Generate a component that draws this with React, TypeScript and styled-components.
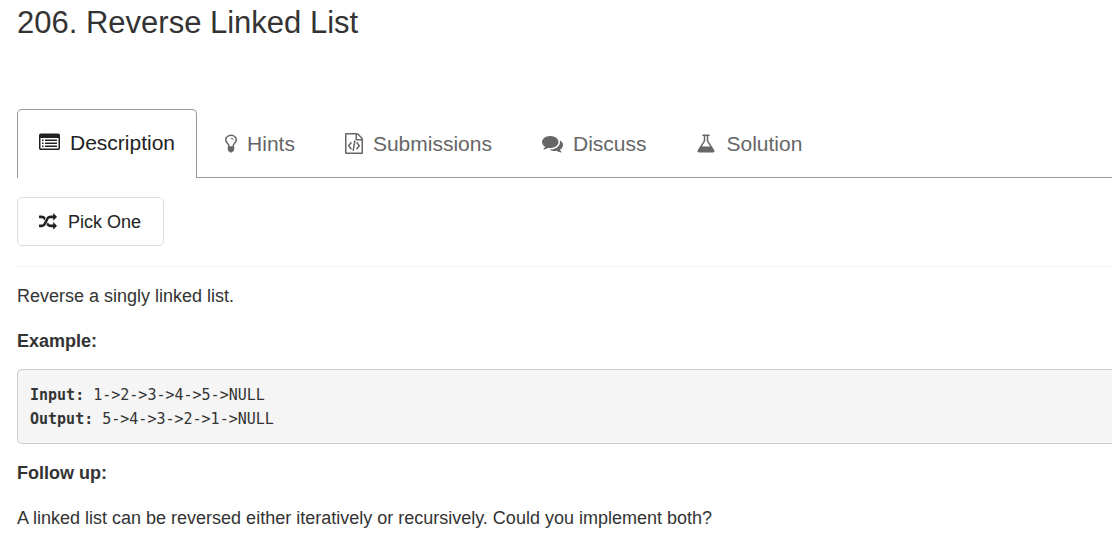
import React from "react";
import styled, { createGlobalStyle } from "styled-components";

const GlobalStyle = createGlobalStyle`
  *, *::before, *::after { box-sizing: border-box; }
  body {
    margin: 0;
    background: #fff;
    color: #333;
    font-family: "Liberation Sans", Arial, sans-serif;
    font-size: 18px;
    line-height: 26px;
  }
`;

const Page = styled.main`
  padding-left: 17px;
  overflow-x: hidden;
`;

const Title = styled.h1`
  margin: 0;
  padding: 6px 0 69px;
  font-size: 31px;
  line-height: 34px;
  font-weight: 400;
`;

const TabList = styled.ul`
  display: flex;
  gap: 6px;
  margin: 0;
  padding: 0;
  list-style: none;
  border-bottom: 1px solid #999;
`;

const TabItem = styled.li`
  display: flex;
  margin-bottom: -1px;
`;

const TabLink = styled.a<{ $active?: boolean }>`
  display: flex;
  align-items: center;
  gap: 10px;
  height: 69px;
  padding: ${(p) => (p.$active ? "0 21px 3px" : "0 21px 1px")};
  border: 1px solid transparent;
  border-radius: 5px 5px 0 0;
  border-bottom: 0;
  font-size: 21px;
  line-height: 30px;
  text-decoration: none;
  color: ${(p) => (p.$active ? "#222" : "#666")};
  border-color: ${(p) => (p.$active ? "#999" : "transparent")};
  background: ${(p) => (p.$active ? "#fff" : "transparent")};
`;

const Icon = styled.svg`
  display: block;
  flex: none;
  fill: currentColor;
`;

const PickButton = styled.button`
  display: flex;
  align-items: center;
  gap: 11px;
  height: 49px;
  margin: 19px 0 20px;
  padding: 0 22px 0 21px;
  border: 1px solid #ddd;
  border-radius: 5px;
  background: #fff;
  color: #222;
  font: inherit;
`;

const Divider = styled.hr`
  margin: 0 0 16px;
  border: 0;
  border-top: 1px dotted #e7e7e7;
`;

const Paragraph = styled.p`
  margin: 0 0 19px;
`;

const CodeBlock = styled.pre`
  margin: -4px 0 16px;
  padding: 13px 12px 12px;
  border: 1px solid #ccc;
  border-right: 0;
  border-radius: 5px 0 0 5px;
  background: #f5f5f5;
  font-family: "DejaVu Sans Mono", monospace;
  font-size: 15px;
  line-height: 24px;
`;

type Glyph = { x: number; span: number; paths: string[] };

const glyphs: Record<string, Glyph> = {
  list: {
    x: 0,
    span: 1792,
    paths: [
      "M384 1184v64q0 13-9.500 22.500t-22.500 9.500h-64q-13 0-22.500-9.500t-9.500-22.500v-64q0-13 9.500-22.500t22.500-9.500h64q13 0 22.500 9.500t9.500 22.500z",
      "M384 928v64q0 13-9.500 22.500t-22.500 9.500h-64q-13 0-22.500-9.500t-9.500-22.500v-64q0-13 9.500-22.500t22.500-9.500h64q13 0 22.500 9.500t9.500 22.500z",
      "M384 672v64q0 13-9.500 22.500t-22.500 9.500h-64q-13 0-22.500-9.500t-9.500-22.500v-64q0-13 9.500-22.500t22.500-9.500h64q13 0 22.500 9.500t9.500 22.500z",
      "M1536 1184v64q0 13-9.500 22.500t-22.500 9.500h-960q-13 0-22.500-9.500t-9.500-22.500v-64q0-13 9.500-22.500t22.500-9.500h960q13 0 22.500 9.500t9.500 22.500z",
      "M1536 928v64q0 13-9.500 22.500t-22.500 9.500h-960q-13 0-22.500-9.500t-9.500-22.500v-64q0-13 9.500-22.500t22.500-9.500h960q13 0 22.500 9.500t9.500 22.500z",
      "M1536 672v64q0 13-9.500 22.500t-22.500 9.500h-960q-13 0-22.500-9.500t-9.500-22.500v-64q0-13 9.500-22.500t22.500-9.500h960q13 0 22.500 9.500t9.500 22.500z",
      "M1664 1376v-832q0-13-9.500-22.500t-22.500-9.500h-1472q-13 0-22.500 9.500t-9.500 22.500v832q0 13 9.500 22.500t22.500 9.500h1472q13 0 22.500-9.500t9.500-22.500zm128-1088v1088q0 66-47 113t-113 47h-1472q-66 0-113-47t-47-113v-1088q0-66 47-113t113-47h1472q66 0 113 47t47 113z",
    ],
  },
  bulb: {
    x: 384,
    span: 1024,
    paths: [
      "M1120 576q0 13-9.500 22.500t-22.500 9.500-22.500-9.500-9.500-22.500q0-46-54-71t-106-25q-13 0-22.500-9.500t-9.500-22.500 9.500-22.500 22.500-9.500q50 0 99.500 16t87 54 37.500 90zm160 0q0-72-34.500-134t-90-101.500-123-62-136.500-22.500-136.500 22.500-123 62-90 101.500-34.500 134q0 101 68 180 10 11 30.500 33t30.500 33q128 153 141 298h228q13-145 141-298 10-11 30.500-33t30.500-33q68-79 68-180zm128 0q0 155-103 268-45 49-74.500 87t-59.500 95.500-34 107.500q47 28 47 82 0 37-25 64 25 27 25 64 0 52-45 81 13 23 13 47 0 46-31.500 71t-77.500 25q-20 44-60 70t-87 26-87-26-60-70q-46 0-77.500-25t-31.500-71q0-24 13-47-45-29-45-81 0-37 25-64-25-27-25-64 0-54 47-82-4-50-34-107.500t-59.500-95.500-74.500-87q-103-113-103-268 0-99 44.500-184.500t117-142 164-89 186.500-32.500 186.500 32.500 164 89 117 142 44.500 184.500z",
    ],
  },
  code: {
    x: 128,
    span: 1536,
    paths: [
      "M1596 380q28 28 48 76t20 88v1152q0 40-28 68t-68 28h-1344q-40 0-68-28t-28-68v-1600q0-40 28-68t68-28h896q40 0 88 20t76 48zm-444-244v376h376q-10-29-22-41l-313-313q-12-12-41-22zm384 1528v-1024h-416q-40 0-68-28t-28-68v-416h-768v1536h1280zm-928-896q8-11 21-12.500t24 6.500l51 38q11 8 12.500 21t-6.500 24l-182 243 182 243q8 11 6.500 24t-12.500 21l-51 38q-11 8-24 6.500t-21-12.500l-226-301q-14-19 0-38zm802 301q14 19 0 38l-226 301q-8 11-21 12.500t-24-6.500l-51-38q-11-8-12.500-21t6.500-24l182-243-182-243q-8-11-6.500-24t12.500-21l51-38q11-8 24-6.500t21 12.500zm-620 461q-13-2-20.500-13t-5.500-24l138-831q2-13 13-20.500t24-5.500l63 10q13 2 20.500 13t5.500 24l-138 831q-2 13-13 20.500t-24 5.500z",
    ],
  },
  comments: {
    x: 0,
    span: 1792,
    paths: [
      "M1408 768q0 139-94 257t-256.500 186.500-353.500 68.500q-86 0-176-16-124 88-278 128-36 9-86 16h-3q-11 0-20.500-8t-11.500-21q-1-3-1-6.500t.5-6.500 2-6l2.500-5 3.500-5.500 4-5 4.500-5 4-4.500q5-6 23-25t26-29.500 22.500-29 25-38.500 20.500-44q-124-72-195-177t-71-224q0-139 94-257t256.500-186.500 353.500-68.500 353.500 68.500 256.500 186.500 94 257zm384 256q0 120-71 224.500t-195 176.500q10 24 20.500 44t25 38.500 22.500 29 26 29.500 23 25q1 1 4 4.500t4.500 5 4 5 3.500 5.500l2.500 5 2 6 .5 6.500-1 6.500q-3 14-13 22t-22 7q-50-7-86-16-154-40-278-128-90 16-176 16-271 0-472-132 58 4 88 4 161 0 309-45t264-129q125-92 192-212t67-254q0-77-23-152 129 71 204 178t75 230z",
    ],
  },
  flask: {
    x: 64,
    span: 1664,
    paths: [
      "M1591 1448q56 89 21.500 152.500t-140.500 63.500h-1152q-106 0-140.500-63.500t21.500-152.500l503-793v-399h-64q-26 0-45-19t-19-45 19-45 45-19h512q26 0 45 19t19 45-19 45-45 19h-64v399zm-779-725l-272 429h712l-272-429-20-31v-436h-128v436z",
    ],
  },
  shuffle: {
    x: 0,
    span: 1792,
    paths: [
      "M666 481q-60 92-137 273-22-45-37-72.500t-40.500-63.500-51-56.500-63-35-81.500-14.500h-224q-14 0-23-9t-9-23v-192q0-14 9-23t23-9h224q250 0 410 225zm1126 799q0 14-9 23l-320 320q-9 9-23 9-13 0-22.500-9.500t-9.500-22.500v-192q-32 0-85 .5t-81 1-73-1-71-5-64-10.500-63-18.500-58-28.500-59-40-55-53.500-56-69.500q59-93 136-273 22 45 37 72.500t40.500 63.500 51 56.500 63 35 81.500 14.500h256v-192q0-14 9-23t23-9q12 0 24 10l319 319q9 9 9 23zm0-896q0 14-9 23l-320 320q-9 9-23 9-13 0-22.500-9.500t-9.500-22.500v-192h-256q-48 0-87 15t-69 45-51 61.500-45 77.500q-32 62-78 171-29 66-49.500 111t-54 105-64 100-74 83-90 68.500-106.500 42-128 16.500h-224q-14 0-23-9t-9-23v-192q0-14 9-23t23-9h224q48 0 87-15t69-45 51-61.500 45-77.500q32-62 78-171 29-66 49.500-111t54-105 64-100 74-83 90-68.500 106.500-42 128-16.500h256v-192q0-14 9-23t23-9q12 0 24 10l319 319q9 9 9 23z",
    ],
  },
};

function GlyphIcon({ name, size }: { name: string; size: number }) {
  const g = glyphs[name];
  return (
    <Icon
      aria-hidden="true"
      width={Math.round((size * g.span) / 1792)}
      height={size}
      viewBox={`${g.x} 0 ${g.span} 1792`}
    >
      {g.paths.map((d) => (
        <path key={d} d={d} />
      ))}
    </Icon>
  );
}

const tabs = [
  { label: "Description", icon: "list" },
  { label: "Hints", icon: "bulb" },
  { label: "Submissions", icon: "code" },
  { label: "Discuss", icon: "comments" },
  { label: "Solution", icon: "flask" },
];

export default function App() {
  return (
    <>
      <GlobalStyle />
      <Page>
        <Title>206. Reverse Linked List</Title>
        <nav>
          <TabList>
            {tabs.map((tab, i) => (
              <TabItem key={tab.label}>
                <TabLink
                  href={`#${tab.label.toLowerCase()}`}
                  $active={i === 0}
                  aria-current={i === 0 ? "page" : undefined}
                >
                  <GlyphIcon name={tab.icon} size={21} />
                  {tab.label}
                </TabLink>
              </TabItem>
            ))}
          </TabList>
        </nav>
        <PickButton type="button">
          <GlyphIcon name="shuffle" size={18} />
          Pick One
        </PickButton>
        <Divider />
        <Paragraph>Reverse a singly linked list.</Paragraph>
        <Paragraph>
          <strong>Example:</strong>
        </Paragraph>
        <CodeBlock>
          <strong>Input:</strong>
          {" 1->2->3->4->5->NULL\n"}
          <strong>Output:</strong>
          {" 5->4->3->2->1->NULL"}
        </CodeBlock>
        <Paragraph>
          <strong>Follow up:</strong>
        </Paragraph>
        <Paragraph>
          A linked list can be reversed either iteratively or recursively. Could you implement both?
        </Paragraph>
      </Page>
    </>
  );
}
